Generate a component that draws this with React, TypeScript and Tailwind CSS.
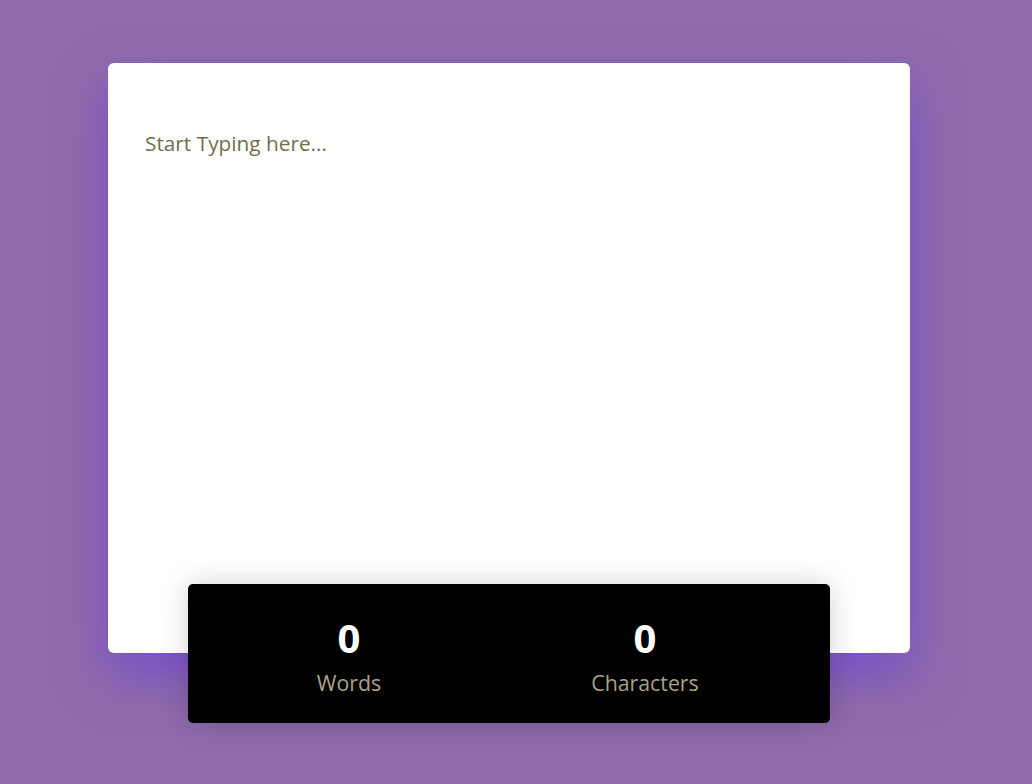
import { useState } from 'react'

export default function App() {
  const [text, setText] = useState('')

  const words = text.trim() ? text.trim().split(/\s+/).length : 0
  const chars = text.length

  return (
    <div
      className="min-h-screen w-full bg-[#8f6bab] pl-[108px] pt-[63px]"
      style={{ fontFamily: '"Open Sans", "Liberation Sans", sans-serif' }}
    >
      <div className="flex w-[802px] flex-col">
        <div className="h-[590px] rounded-[6px] bg-white shadow-[0_22px_50px_rgba(104,62,222,0.6)]">
          <textarea
            value={text}
            onChange={e => setText(e.target.value)}
            placeholder="Start Typing here..."
            className="h-[500px] w-full resize-none bg-transparent px-[37px] pt-[66px] text-[20.8px] leading-[28px] text-[#4a4a4a] outline-none placeholder:text-[#6f6f48]"
          />
        </div>

        <div className="relative mx-[80px] -mt-[69px] flex h-[139px] rounded-[5px] bg-black pl-[13px] shadow-[0_0_28px_rgba(0,0,0,0.18)]">
          <div className="flex w-[296px] flex-col items-center pt-[26px]">
            <span className="text-[40px] font-bold leading-[56px] text-white">{words}</span>
            <span className="mt-[3px] text-[21.3px] leading-[28px] text-[#a9a287]">Words</span>
          </div>
          <div className="flex w-[296px] flex-col items-center pt-[26px]">
            <span className="text-[40px] font-bold leading-[56px] text-white">{chars}</span>
            <span className="mt-[3px] text-[21.3px] leading-[28px] text-[#a9a287]">Characters</span>
          </div>
        </div>
      </div>
    </div>
  )
}
